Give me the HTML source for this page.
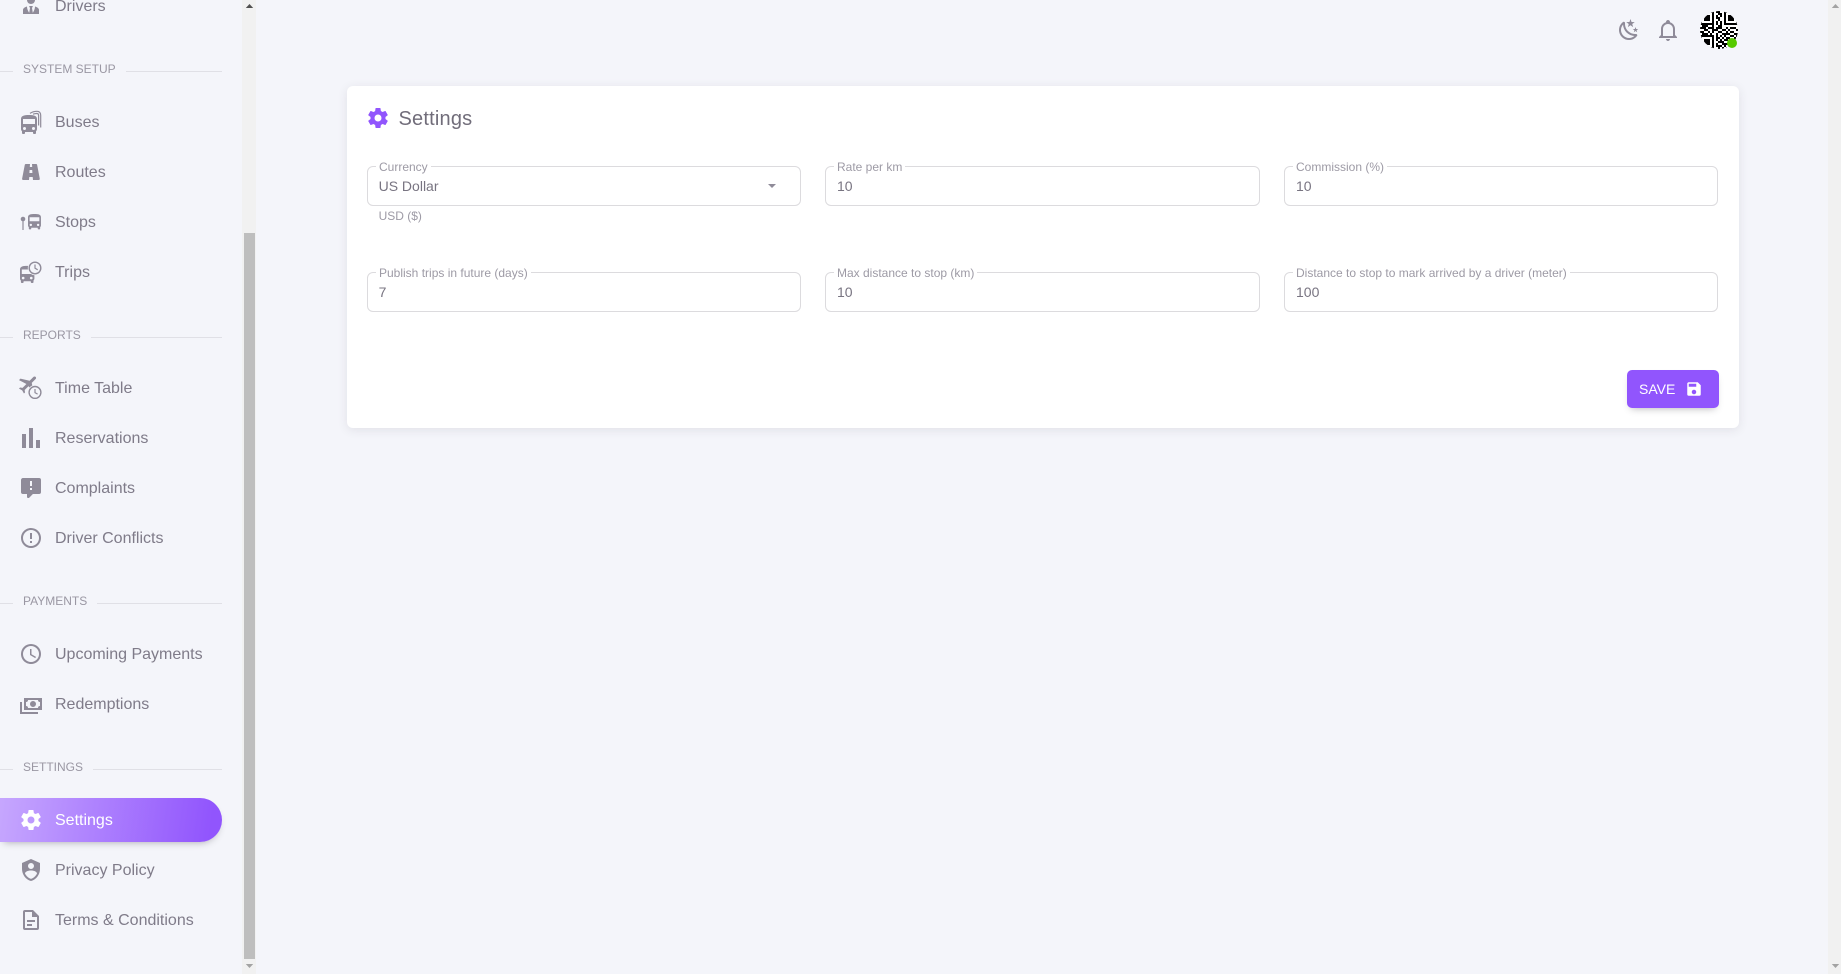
<!DOCTYPE html>
<html lang="en">
<head>
<meta charset="utf-8">
<title>Settings</title>
<style>
html,body{margin:0;padding:0;width:1841px;height:974px;overflow:hidden;background:#f4f5fa;font-family:"Liberation Sans",sans-serif;color:#7c7985}
*{box-sizing:border-box}
.abs,.n,.s,.l,.i,.f,.lab,.val{position:absolute}
.n{left:55px;font-size:16px;line-height:24px;white-space:nowrap;color:#7f7b89}
.s{left:23px;font-size:12px;line-height:16px;white-space:nowrap;color:#9a97a3;text-transform:uppercase}
.l{height:1px;background:#e0e0e6}
.i{width:24px;height:24px;left:19px;fill:#8f8b99;overflow:visible}
.f{height:40px;width:434px;border:1px solid #dcdbde;border-radius:6px;background:#fff}
.lab{font-size:12px;line-height:14px;background:#fff;padding:0 3px;color:#9d9aa5;white-space:nowrap}
.val{font-size:14px;line-height:20px;color:#787481;white-space:nowrap}
</style>
</head>
<body>

<!-- sidebar scrollbar -->
<div class="abs" style="left:242px;top:0;width:14px;height:974px;background:#f1f1f1"></div>
<div class="abs" style="left:244px;top:233px;width:11px;height:726px;background:#bebebe"></div>
<svg class="abs" style="left:245px;top:3px" width="9" height="6"><path d="M.8 5L4.5 1 8.2 5z" fill="#505050"/></svg>
<svg class="abs" style="left:245px;top:963px" width="9" height="6"><path d="M.8 1L4.5 5 8.2 1z" fill="#a3a3a3"/></svg>

<!-- page scrollbar -->
<div class="abs" style="left:1828px;top:0;width:13px;height:974px;background:#f1f1f1"></div>
<svg class="abs" style="left:1831px;top:3px" width="9" height="6"><path d="M.8 5L4.5 1 8.2 5z" fill="#a3a3a3"/></svg>
<svg class="abs" style="left:1831px;top:963px" width="9" height="6"><path d="M.8 1L4.5 5 8.2 1z" fill="#a3a3a3"/></svg>

<!-- sidebar items -->
<svg class="i" style="top:-7px" viewBox="0 0 24 24"><path d="M12 3C14.21 3 16 4.79 16 7S14.21 11 12 11 8 9.21 8 7 9.79 3 12 3M16 13.54C16 14.6 15.72 17.07 13.81 19.83L13 15L13.94 13.12C13.32 13.05 12.67 13 12 13S10.68 13.05 10.06 13.12L11 15L10.19 19.83C8.28 17.07 8 14.6 8 13.54C5.61 14.24 4 15.5 4 17V21H20V17C20 15.5 18.4 14.24 16 13.54Z"/></svg>
<div class="n" style="top:-5px">Drivers</div>

<div class="s" style="top:61px">System Setup</div>
<div class="l" style="left:0;top:71px;width:13px"></div>
<div class="l" style="left:126px;top:71px;width:96px"></div>

<svg class="i" style="top:110px" viewBox="0 0 24 24"><path transform="translate(-2 3)" d="M18,11H6V6H18M16.5,17A1.5,1.5 0 0,1 15,15.5A1.5,1.5 0 0,1 16.5,14A1.5,1.5 0 0,1 18,15.5A1.5,1.5 0 0,1 16.5,17M7.5,17A1.5,1.5 0 0,1 6,15.5A1.5,1.5 0 0,1 7.5,14A1.5,1.5 0 0,1 9,15.5A1.5,1.5 0 0,1 7.5,17M4,16C4,16.88 4.39,17.67 5,18.22V20A1,1 0 0,0 6,21H7A1,1 0 0,0 8,20V19H16V20A1,1 0 0,0 17,21H18A1,1 0 0,0 19,20V18.22C19.61,17.67 20,16.88 20,16V6C20,2.5 16.42,2 12,2C7.58,2 4,2.5 4,6V16Z"/><path d="M11 3.4C13 2 15.5 1.3 18 1.3C20.6 1.3 21.7 2.8 21.7 5.5V17.5M14 4.2C15.5 3.6 17 3.4 18.2 3.5C19.2 3.6 19.6 4.3 19.6 5.5V15.5" fill="none" stroke="#8f8b99" stroke-width="1.2"/></svg>
<div class="n" style="top:111px">Buses</div>

<svg class="i" style="top:159.5px" viewBox="0 0 24 24"><path d="M18.1,4.8C18,4.3 17.6,4 17.1,4H13L13.2,7H10.8L11,4H6.8C6.3,4 5.9,4.4 5.8,4.8L3.1,18.8C3,19.4 3.5,20 4.1,20H10L10.3,17H13.7L14,20H19.8C20.4,20 20.9,19.4 20.8,18.8L18.1,4.8M10.4,13L10.6,10H13.2L13.4,13H10.4Z"/></svg>
<div class="n" style="top:161px">Routes</div>

<svg class="i" style="top:210px" viewBox="0 0 24 24"><path transform="translate(5.76 2.38) scale(.81)" d="M18,11H6V6H18M16.5,17A1.5,1.5 0 0,1 15,15.5A1.5,1.5 0 0,1 16.5,14A1.5,1.5 0 0,1 18,15.5A1.5,1.5 0 0,1 16.5,17M7.5,17A1.5,1.5 0 0,1 6,15.5A1.5,1.5 0 0,1 7.5,14A1.5,1.5 0 0,1 9,15.5A1.5,1.5 0 0,1 7.5,17M4,16C4,16.88 4.39,17.67 5,18.22V20A1,1 0 0,0 6,21H7A1,1 0 0,0 8,20V19H16V20A1,1 0 0,0 17,21H18A1,1 0 0,0 19,20V18.22C19.61,17.67 20,16.88 20,16V6C20,2.5 16.42,2 12,2C7.58,2 4,2.5 4,6V16Z"/><circle cx="4" cy="9" r="2.3"/><rect x="3.4" y="9" width="1.2" height="11"/></svg>
<div class="n" style="top:211px">Stops</div>

<svg class="i" style="top:259px" viewBox="0 0 24 24"><path transform="translate(-2.6 5.1) scale(.9)" d="M18,11H6V6H18M16.5,17A1.5,1.5 0 0,1 15,15.5A1.5,1.5 0 0,1 16.5,14A1.5,1.5 0 0,1 18,15.5A1.5,1.5 0 0,1 16.5,17M7.5,17A1.5,1.5 0 0,1 6,15.5A1.5,1.5 0 0,1 7.5,14A1.5,1.5 0 0,1 9,15.5A1.5,1.5 0 0,1 7.5,17M4,16C4,16.88 4.39,17.67 5,18.22V20A1,1 0 0,0 6,21H7A1,1 0 0,0 8,20V19H16V20A1,1 0 0,0 17,21H18A1,1 0 0,0 19,20V18.22C19.61,17.67 20,16.88 20,16V6C20,2.5 16.42,2 12,2C7.58,2 4,2.5 4,6V16Z"/><circle cx="16" cy="9" r="7.2" fill="#f4f5fa"/><circle cx="16" cy="9" r="5.8" fill="#f4f5fa" stroke="#8f8b99" stroke-width="1.4"/><path d="M16 5.5V9.2L18.7 10.8" fill="none" stroke="#8f8b99" stroke-width="1.2"/></svg>
<div class="n" style="top:261px">Trips</div>

<div class="s" style="top:327px">Reports</div>
<div class="l" style="left:0;top:337px;width:13px"></div>
<div class="l" style="left:91px;top:337px;width:131px"></div>

<svg class="i" style="top:372.6px" viewBox="0 0 24 24"><path transform="translate(-3.94 0)" d="M20.56 3.91C21.15 4.5 21.15 5.45 20.56 6.03L16.67 9.92L18.79 19.11L17.38 20.53L13.5 13.1L9.6 17L9.96 19.47L8.89 20.53L7.13 17.35L3.94 15.58L5 14.5L7.5 14.87L11.37 11L3.94 7.09L5.36 5.68L14.55 7.8L18.44 3.91C19 3.33 20 3.33 20.56 3.91Z"/><circle cx="16" cy="19.4" r="7.4" fill="#f4f5fa"/><circle cx="16" cy="19.4" r="5.9" fill="#f4f5fa" stroke="#8f8b99" stroke-width="1.4"/><path d="M16 16V19.6L18.6 21.1" fill="none" stroke="#8f8b99" stroke-width="1.2"/></svg>
<div class="n" style="top:377px">Time Table</div>

<svg class="i" style="top:426px" viewBox="0 0 24 24"><path d="M3,22V8H7V22H3M10,22V2H14V22H10M17,22V14H21V22H17Z"/></svg>
<div class="n" style="top:427px">Reservations</div>

<svg class="i" style="top:476px" viewBox="0 0 24 24"><path d="M9,22A1,1 0 0,1 8,21V18H4A2,2 0 0,1 2,16V4C2,2.89 2.9,2 4,2H20A2,2 0 0,1 22,4V16A2,2 0 0,1 20,18H13.9L10.2,21.71C10,21.9 9.75,22 9.5,22V22H9M13,10V5H11V10H13M13,14V12H11V14H13Z"/></svg>
<div class="n" style="top:477px">Complaints</div>

<svg class="i" style="top:526px" viewBox="0 0 24 24"><path d="M11,15H13V17H11V15M11,7H13V13H11V7M12,2C6.47,2 2,6.5 2,12A10,10 0 0,0 12,22A10,10 0 0,0 22,12A10,10 0 0,0 12,2M12,20A8,8 0 0,1 4,12A8,8 0 0,1 12,4A8,8 0 0,1 20,12A8,8 0 0,1 12,20Z"/></svg>
<div class="n" style="top:527px">Driver Conflicts</div>

<div class="s" style="top:593px">Payments</div>
<div class="l" style="left:0;top:603px;width:13px"></div>
<div class="l" style="left:97px;top:603px;width:125px"></div>

<svg class="i" style="top:642px" viewBox="0 0 24 24"><path d="M12,20A8,8 0 0,0 20,12A8,8 0 0,0 12,4A8,8 0 0,0 4,12A8,8 0 0,0 12,20M12,2A10,10 0 0,1 22,12A10,10 0 0,1 12,22C6.47,22 2,17.5 2,12A10,10 0 0,1 12,2M12.5,7V12.25L17,14.92L16.25,16.15L11,13V7H12.5Z"/></svg>
<div class="n" style="top:643px">Upcoming Payments</div>

<svg class="i" style="top:692px" viewBox="0 0 24 24"><path d="M5,6H23V18H5V6M14,9A3,3 0 0,1 17,12A3,3 0 0,1 14,15A3,3 0 0,1 11,12A3,3 0 0,1 14,9M9,8A2,2 0 0,1 7,10V14A2,2 0 0,1 9,16H19A2,2 0 0,1 21,14V10A2,2 0 0,1 19,8H9M1,10H3V20H19V22H1V10Z"/></svg>
<div class="n" style="top:693px">Redemptions</div>

<div class="s" style="top:759px">Settings</div>
<div class="l" style="left:0;top:769px;width:13px"></div>
<div class="l" style="left:93px;top:769px;width:129px"></div>

<div class="abs" style="left:0;top:798px;width:222px;height:44px;border-radius:0 22px 22px 0;background:linear-gradient(98deg,#c6a7fe,#9155fd 94%);box-shadow:0 4px 8px -4px rgba(58,53,65,.42)"></div>
<svg class="i" style="top:808px;fill:#fff" viewBox="0 0 24 24"><path d="M12,15.5A3.5,3.5 0 0,1 8.5,12A3.5,3.5 0 0,1 12,8.5A3.5,3.5 0 0,1 15.5,12A3.5,3.5 0 0,1 12,15.5M19.43,12.97C19.47,12.65 19.5,12.33 19.5,12C19.5,11.67 19.47,11.34 19.43,11L21.54,9.37C21.73,9.22 21.78,8.95 21.66,8.73L19.66,5.27C19.54,5.05 19.27,4.96 19.05,5.05L16.56,6.05C16.04,5.66 15.5,5.32 14.87,5.07L14.5,2.42C14.46,2.18 14.25,2 14,2H10C9.75,2 9.54,2.18 9.5,2.42L9.13,5.07C8.5,5.32 7.96,5.66 7.44,6.05L4.95,5.05C4.73,4.96 4.46,5.05 4.34,5.27L2.34,8.73C2.21,8.95 2.27,9.22 2.46,9.37L4.57,11C4.53,11.34 4.5,11.67 4.5,12C4.5,12.33 4.53,12.65 4.57,12.97L2.46,14.63C2.27,14.78 2.21,15.05 2.34,15.27L4.34,18.73C4.46,18.95 4.73,19.03 4.95,18.95L7.44,17.94C7.96,18.34 8.5,18.68 9.13,18.93L9.5,21.58C9.54,21.82 9.75,22 10,22H14C14.25,22 14.46,21.82 14.5,21.58L14.87,18.93C15.5,18.67 16.04,18.34 16.56,17.94L19.05,18.95C19.27,19.03 19.54,18.95 19.66,18.73L21.66,15.27C21.78,15.05 21.73,14.78 21.54,14.63L19.43,12.97Z"/></svg>
<div class="n" style="top:809px;color:#fff">Settings</div>

<svg class="i" style="top:858px" viewBox="0 0 24 24"><path d="M12,1L3,5V11C3,16.55 6.84,21.74 12,23C17.16,21.74 21,16.55 21,11V5L12,1M12,5A3,3 0 0,1 15,8A3,3 0 0,1 12,11A3,3 0 0,1 9,8A3,3 0 0,1 12,5M17.13,17C15.92,18.85 14.11,20.24 12,20.92C9.89,20.24 8.08,18.85 6.87,17C6.53,16.5 6.24,16 6,15.47C6,13.82 8.71,12.47 12,12.47C15.29,12.47 18,13.79 18,15.47C17.76,16 17.47,16.5 17.13,17Z"/></svg>
<div class="n" style="top:859px">Privacy Policy</div>

<svg class="i" style="top:908px" viewBox="0 0 24 24"><path d="M6,2A2,2 0 0,0 4,4V20A2,2 0 0,0 6,22H18A2,2 0 0,0 20,20V8L14,2H6M6,4H13V9H18V20H6V4M8,12V14H16V12H8M8,16V18H13V16H8Z"/></svg>
<div class="n" style="top:909px">Terms &amp; Conditions</div>

<!-- top bar -->
<svg class="i" style="left:1617px;top:18px;fill:#8f8b99" viewBox="0 0 24 24"><path d="M17.75,4.09L15.22,6.03L16.13,9.09L13.5,7.28L10.87,9.09L11.78,6.03L9.25,4.09L12.44,4L13.5,1L14.56,4L17.75,4.09M21.25,11L19.61,12.25L20.2,14.23L18.5,13.06L16.8,14.23L17.39,12.25L15.75,11L17.81,10.95L18.5,9L19.19,10.95L21.25,11M18.97,15.95C19.8,15.87 20.69,17.05 20.16,17.8C19.84,18.25 19.5,18.67 19.08,19.07C15.17,23 8.84,23 4.94,19.07C1.03,15.17 1.03,8.83 4.94,4.93C5.34,4.53 5.76,4.17 6.21,3.85C6.96,3.32 8.14,4.21 8.06,5.04C7.79,7.9 8.75,10.87 10.95,13.06C13.14,15.26 16.1,16.22 18.97,15.95M17.33,17.97C14.5,17.81 11.7,16.64 9.53,14.5C7.36,12.31 6.2,9.5 6.04,6.68C3.23,9.82 3.34,14.64 6.35,17.66C9.37,20.67 14.19,20.78 17.33,17.97Z"/></svg>
<svg class="i" style="left:1655.5px;top:18px;fill:#8f8b99" viewBox="0 0 24 24"><path d="M10 21H14C14 22.1 13.1 23 12 23S10 22.1 10 21M21 19V20H3V19L5 17V11C5 7.9 7 5.2 10 4.3V4C10 2.9 10.9 2 12 2S14 2.9 14 4V4.3C17 5.2 19 7.9 19 11V17L21 19M17 11C17 8.2 14.8 6 12 6S7 8.2 7 11V18H17V11Z"/></svg>

<svg class="abs" style="left:1700px;top:11px;border-radius:50%;background:#fff" width="38" height="38" viewBox="0 0 19 19">
<path fill-rule="evenodd" d="M0 0h7v7h-7zM1 1v5h5v-5zM2 2h3v3h-3zM12 0h7v7h-7zM13 1v5h5v-5zM14 2h3v3h-3zM0 12h7v7h-7zM1 13v5h5v-5zM2 14h3v3h-3z"/>
<path fill="none" stroke="#000" d="M8 .5h2M9 1.5h2M8 2.5h1M10 2.5h1M8 3.5h2M9 4.5h1M8 5.5h1M10 5.5h1M8 6.5h1M10 6.5h1M1 7.5h3M6 7.5h1M9 7.5h2M0 8.5h3M4 8.5h3M8 8.5h3M13 8.5h1M15 8.5h3M2 9.5h2M6 9.5h3M11 9.5h2M14 9.5h1M18 9.5h1M0 10.5h2M4 10.5h1M6 10.5h1M9 10.5h2M13 10.5h1M15 10.5h2M1 11.5h3M5 11.5h1M8 11.5h1M11 11.5h4M17 11.5h2M8 12.5h1M10 12.5h1M12 12.5h1M15 12.5h2M18 12.5h1M8 13.5h2M11 13.5h1M13 13.5h2M17 13.5h1M8 14.5h1M10 14.5h1M12 14.5h2M15 14.5h4M9 15.5h3M14 15.5h1M16 15.5h1M8 16.5h1M11 16.5h3M15 16.5h1M17 16.5h2M8 17.5h3M12 17.5h1M14 17.5h3M9 18.5h1M11 18.5h1M13 18.5h2M17 18.5h2"/>
</svg>
<div class="abs" style="left:1727px;top:38px;width:10px;height:10px;border-radius:50%;background:#56ca00"></div>

<!-- card -->
<div class="abs" style="left:347px;top:86px;width:1392px;height:342px;background:#fff;border-radius:6px;box-shadow:0 2px 10px 0 rgba(58,53,65,.1)"></div>

<svg class="i" style="left:366px;top:106px;fill:#9155fd" viewBox="0 0 24 24"><path d="M12,15.5A3.5,3.5 0 0,1 8.5,12A3.5,3.5 0 0,1 12,8.5A3.5,3.5 0 0,1 15.5,12A3.5,3.5 0 0,1 12,15.5M19.43,12.97C19.47,12.65 19.5,12.33 19.5,12C19.5,11.67 19.47,11.34 19.43,11L21.54,9.37C21.73,9.22 21.78,8.95 21.66,8.73L19.66,5.27C19.54,5.05 19.27,4.96 19.05,5.05L16.56,6.05C16.04,5.66 15.5,5.32 14.87,5.07L14.5,2.42C14.46,2.18 14.25,2 14,2H10C9.75,2 9.54,2.18 9.5,2.42L9.13,5.07C8.5,5.32 7.96,5.66 7.44,6.05L4.95,5.05C4.73,4.96 4.46,5.05 4.34,5.27L2.34,8.73C2.21,8.95 2.27,9.22 2.46,9.37L4.57,11C4.53,11.34 4.5,11.67 4.5,12C4.5,12.33 4.53,12.65 4.57,12.97L2.46,14.63C2.27,14.78 2.21,15.05 2.34,15.27L4.34,18.73C4.46,18.95 4.73,19.03 4.95,18.95L7.44,17.94C7.96,18.34 8.5,18.68 9.13,18.93L9.5,21.58C9.54,21.82 9.75,22 10,22H14C14.25,22 14.46,21.82 14.5,21.58L14.87,18.93C15.5,18.67 16.04,18.34 16.56,17.94L19.05,18.95C19.27,19.03 19.54,18.95 19.66,18.73L21.66,15.27C21.78,15.05 21.73,14.78 21.54,14.63L19.43,12.97Z"/></svg>
<div class="abs" style="left:398.5px;top:106px;font-size:20px;line-height:26px;letter-spacing:.2px;color:#716d7a">Settings</div>

<!-- row 1 -->
<div class="f" style="left:367px;top:166px"></div>
<div class="lab" style="left:376px;top:160px">Currency</div>
<div class="val" style="left:378.6px;top:176px">US Dollar</div>
<svg class="abs" style="left:767px;top:183px" width="10" height="6"><path d="M1 1h8L5 5z" fill="#8f8b99"/></svg>
<div class="abs" style="left:378.6px;top:209px;font-size:12px;line-height:14px;color:#9d9aa5">USD ($)</div>

<div class="f" style="left:825px;top:166px;width:435px"></div>
<div class="lab" style="left:834px;top:160px">Rate per km</div>
<div class="val" style="left:837px;top:176px">10</div>

<div class="f" style="left:1284px;top:166px"></div>
<div class="lab" style="left:1293px;top:160px">Commission (%)</div>
<div class="val" style="left:1296px;top:176px">10</div>

<!-- row 2 -->
<div class="f" style="left:367px;top:272px"></div>
<div class="lab" style="left:376px;top:266px">Publish trips in future (days)</div>
<div class="val" style="left:378.6px;top:282px">7</div>

<div class="f" style="left:825px;top:272px;width:435px"></div>
<div class="lab" style="left:834px;top:266px">Max distance to stop (km)</div>
<div class="val" style="left:837px;top:282px">10</div>

<div class="f" style="left:1284px;top:272px"></div>
<div class="lab" style="left:1293px;top:266px">Distance to stop to mark arrived by a driver (meter)</div>
<div class="val" style="left:1296px;top:282px">100</div>

<!-- save -->
<div class="abs" style="left:1627px;top:370px;width:92px;height:38px;background:#9155fd;border-radius:5px;box-shadow:0 4px 8px -4px rgba(58,53,65,.42)"></div>
<div class="abs" style="left:1639px;top:381px;font-size:14px;line-height:16px;color:#fff">SAVE</div>
<svg class="abs" style="left:1685px;top:380px;fill:#fff" width="18" height="18" viewBox="0 0 24 24"><path d="M15,9H5V5H15M12,19A3,3 0 0,1 9,16A3,3 0 0,1 12,13A3,3 0 0,1 15,16A3,3 0 0,1 12,19M17,3H5C3.89,3 3,3.9 3,5V19A2,2 0 0,0 5,21H19A2,2 0 0,0 21,19V7L17,3Z"/></svg>

</body>
</html>
